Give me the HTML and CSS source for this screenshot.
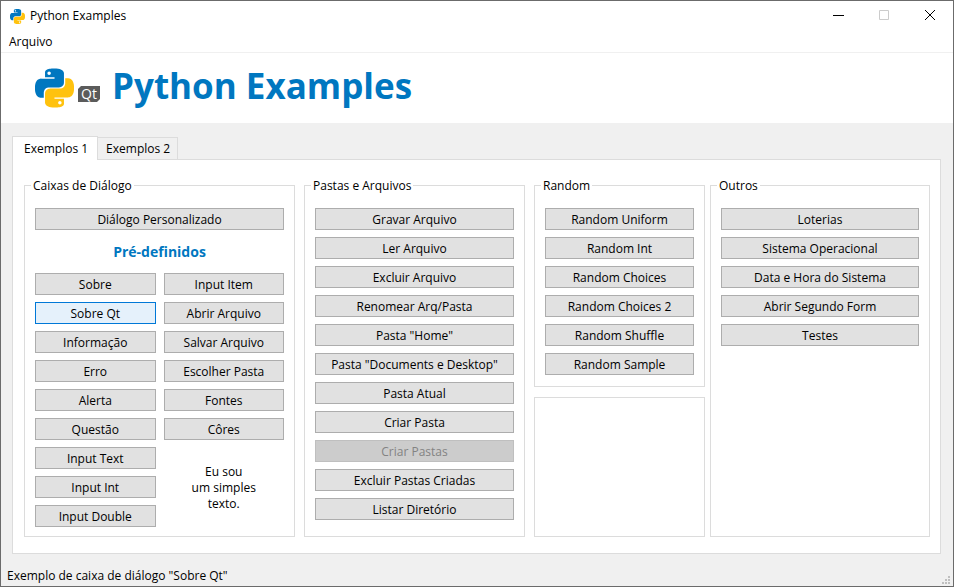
FILE: index.html
```html
<!DOCTYPE html>
<html lang="pt-BR">
<head>
<meta charset="utf-8">
<title>Python Examples</title>
<link rel="stylesheet" href="styles.css">
</head>
<body>
<svg class="defs" aria-hidden="true">
  <symbol id="python" viewBox="0 0 24 24">
    <path class="snake-top" fill-rule="evenodd" d="M14.25.18l.9.2.73.26.59.3.45.32.34.34.25.34.16.33.1.3.04.26.02.2-.01.13V8.5l-.05.63-.13.55-.21.46-.26.38-.3.31-.33.25-.35.19-.35.14-.33.1-.3.07-.26.04-.21.02H8.77l-.69.05-.59.14-.5.22-.41.27-.33.32-.27.35-.2.36-.15.37-.1.35-.07.32-.04.27-.02.21v3.06H3.17l-.21-.03-.28-.07-.32-.12-.35-.18-.36-.26-.36-.36-.35-.46-.32-.59-.28-.73-.21-.88-.14-1.05-.05-1.23.06-1.22.16-1.04.24-.87.32-.71.36-.57.4-.44.42-.33.42-.24.4-.16.36-.1.32-.05.24-.01h.16l.06.01h8.16v-.83H6.18l-.01-2.75-.02-.37.05-.34.11-.31.17-.28.25-.26.31-.23.38-.2.44-.18.51-.15.58-.12.64-.1.71-.06.77-.04.84-.02 1.27.05zm-6.3 1.98l-.23.33-.08.41.08.41.23.34.33.22.41.09.41-.09.33-.22.23-.34.08-.41-.08-.41-.23-.33-.33-.22-.41-.09-.41.09z"/>
    <path class="snake-bottom" fill-rule="evenodd" d="M21.04 6.11l.28.06.32.12.35.18.36.27.36.35.35.47.32.59.28.73.21.88.14 1.04.05 1.23-.06 1.23-.16 1.04-.24.86-.32.71-.36.57-.4.45-.42.33-.42.24-.4.16-.36.09-.32.05-.24.02-.16-.01h-8.22v.82h5.84l.01 2.76.02.36-.05.34-.11.31-.17.29-.25.25-.31.24-.38.2-.44.17-.51.15-.58.13-.64.09-.71.07-.77.04-.84.01-1.27-.04-1.07-.14-.9-.2-.73-.25-.59-.3-.45-.33-.34-.34-.25-.34-.16-.33-.1-.3-.04-.25-.02-.2.01-.13v-5.34l.05-.64.13-.54.21-.46.26-.38.3-.32.33-.24.35-.2.35-.14.33-.1.3-.06.26-.04.21-.02.13-.01h5.84l.69-.05.59-.14.5-.21.41-.28.33-.32.27-.35.2-.36.15-.36.1-.35.07-.32.04-.28.02-.21V6.07h2.09l.14.01zm-6.47 14.25l-.23.33-.08.41.08.41.23.33.33.23.41.08.41-.08.33-.23.23-.33.08-.41-.08-.41-.23-.33-.33-.23-.41-.08-.41.08z"/>
  </symbol>
</svg>
<div class="window">
  <header class="titlebar">
    <svg class="app-icon" aria-hidden="true"><use href="#python"/></svg>
    <span class="window-title">Python Examples</span>
    <button class="caption" type="button" aria-label="Minimizar"><svg viewBox="0 0 12 12"><path d="M1 5.500h11"/></svg></button>
    <button class="caption" type="button" aria-label="Maximizar" disabled><svg viewBox="0 0 12 12"><path d="M1.500 .5h9v9h-9z"/></svg></button>
    <button class="caption" type="button" aria-label="Fechar"><svg viewBox="0 0 12 12"><path d="M1 0l10 10M11 0L1 10"/></svg></button>
  </header>
  <nav class="menubar"><button type="button">Arquivo</button></nav>
  <div class="banner">
    <svg class="logo" viewBox="0 0 66 40" role="img" aria-label="Python Qt">
      <use href="#python" width="39" height="40"/>
      <path class="qt-plate" d="M46 18h19v13l-3 3H43V21z"/>
      <text class="qt-text" x="54" y="31" text-anchor="middle">Qt</text>
    </svg>
    <h1>Python Examples</h1>
  </div>
  <main>
    <div class="tabs" role="tablist">
      <button class="tab active" type="button" role="tab" aria-selected="true">Exemplos 1</button>
      <button class="tab" type="button" role="tab" aria-selected="false">Exemplos 2</button>
    </div>
    <div class="panel" role="tabpanel">
      <fieldset>
        <legend>Caixas de Diálogo</legend>
        <div class="stack">
          <button class="push" type="button">Diálogo Personalizado</button>
        </div>
        <h2>Pré-definidos</h2>
        <div class="pairs">
          <div class="stack">
            <button class="push" type="button">Sobre</button>
            <button class="push hover" type="button">Sobre Qt</button>
            <button class="push" type="button">Informação</button>
            <button class="push" type="button">Erro</button>
            <button class="push" type="button">Alerta</button>
            <button class="push" type="button">Questão</button>
            <button class="push" type="button">Input Text</button>
            <button class="push" type="button">Input Int</button>
            <button class="push" type="button">Input Double</button>
          </div>
          <div class="stack">
            <button class="push" type="button">Input Item</button>
            <button class="push" type="button">Abrir Arquivo</button>
            <button class="push" type="button">Salvar Arquivo</button>
            <button class="push" type="button">Escolher Pasta</button>
            <button class="push" type="button">Fontes</button>
            <button class="push" type="button">Côres</button>
            <p class="note">Eu sou<br>um simples<br>texto.</p>
          </div>
        </div>
      </fieldset>
      <fieldset>
        <legend>Pastas e Arquivos</legend>
        <div class="stack">
          <button class="push" type="button">Gravar Arquivo</button>
          <button class="push" type="button">Ler Arquivo</button>
          <button class="push" type="button">Excluir Arquivo</button>
          <button class="push" type="button">Renomear Arq/Pasta</button>
          <button class="push" type="button">Pasta "Home"</button>
          <button class="push" type="button">Pasta "Documents e Desktop"</button>
          <button class="push" type="button">Pasta Atual</button>
          <button class="push" type="button">Criar Pasta</button>
          <button class="push" type="button" disabled>Criar Pastas</button>
          <button class="push" type="button">Excluir Pastas Criadas</button>
          <button class="push" type="button">Listar Diretório</button>
        </div>
      </fieldset>
      <div class="right">
        <div class="column">
          <fieldset>
            <legend>Random</legend>
            <div class="stack">
              <button class="push" type="button">Random Uniform</button>
              <button class="push" type="button">Random Int</button>
              <button class="push" type="button">Random Choices</button>
              <button class="push" type="button">Random Choices 2</button>
              <button class="push" type="button">Random Shuffle</button>
              <button class="push" type="button">Random Sample</button>
            </div>
          </fieldset>
          <div class="empty"></div>
        </div>
        <fieldset>
          <legend>Outros</legend>
          <div class="stack">
            <button class="push" type="button">Loterias</button>
            <button class="push" type="button">Sistema Operacional</button>
            <button class="push" type="button">Data e Hora do Sistema</button>
            <button class="push" type="button">Abrir Segundo Form</button>
            <button class="push" type="button">Testes</button>
          </div>
        </fieldset>
      </div>
    </div>
  </main>
  <footer class="status">
    <span>Exemplo de caixa de diálogo "Sobre Qt"</span>
    <svg class="grip" viewBox="0 0 8 8" aria-hidden="true"><path d="M6 0h2v2h-2zM3 3h2v2h-2zM6 3h2v2h-2zM0 6h2v2h-2zM3 6h2v2h-2zM6 6h2v2h-2z"/></svg>
  </footer>
</div>
</body>
</html>
```
FILE: styles.css
```css
:root {
  --line: #dcdcdc;
  --blue: #0077c0;
}
* { box-sizing: border-box; }
body {
  margin: 0;
  font: 12px/16px "Open Sans", "Noto Sans", sans-serif;
  color: #000;
}
button {
  font: inherit;
  color: inherit;
  border: 0;
  background: none;
  padding: 0;
}
.defs { position: absolute; width: 0; height: 0; }
.snake-top { fill: var(--blue); }
.snake-bottom { fill: #ffc20e; }

.window {
  min-height: 100vh;
  display: flex;
  flex-direction: column;
  background: #f0f0f0;
  border: 1px solid #6b6b6b;
}
.titlebar {
  display: flex;
  align-items: center;
  height: 30px;
  padding-left: 9px;
  background: #fff;
}
.app-icon { width: 15px; height: 15px; margin-right: 5px; }
.window-title { flex: 1; }
.caption {
  width: 46px;
  height: 28px;
  display: grid;
  place-items: center;
}
.caption svg {
  width: 12px;
  height: 12px;
  fill: none;
  stroke: #000;
}
.caption:disabled svg { stroke: #ccc; }
.menubar {
  height: 22px;
  padding-left: 8px;
  background: #fff;
  border-bottom: 1px solid #f0f0f0;
}
.menubar button { height: 21px; }
.banner {
  display: flex;
  align-items: center;
  gap: 11px;
  height: 70px;
  padding-left: 34px;
  background: #fff;
}
.logo { width: 66px; height: 40px; }
.qt-plate { fill: #5b5b5b; }
.qt-text { font: 14px "Open Sans", sans-serif; fill: #fff; }
h1 {
  margin: 0;
  font-size: 35px;
  line-height: 66px;
  color: var(--blue);
  align-self: flex-start;
}

main {
  flex: 1;
  display: flex;
  flex-direction: column;
  padding: 13px 12px 0 11px;
}
.tabs { display: flex; align-items: flex-end; }
.tab {
  height: 22px;
  padding: 1px 7px 0 8px;
  border: 1px solid var(--line);
  border-width: 1px 1px 0 0;
}
.tab.active {
  height: 24px;
  padding: 0 9px 0 11px;
  border-left-width: 1px;
  background: #fff;
  margin-bottom: -1px;
  position: relative;
}
.panel {
  flex: 1;
  display: grid;
  grid-template-columns: 271fr 221fr 396fr;
  gap: 9px;
  padding: 18px 10px 16px 11px;
  background: #fff;
  border: 1px solid var(--line);
}
.right {
  display: grid;
  grid-template-columns: 171fr 220fr;
  gap: 5px;
}
.column {
  display: flex;
  flex-direction: column;
  gap: 10px;
}
.empty { flex: 1; border: 1px solid var(--line); }
fieldset {
  min-width: 0;
  margin: 0;
  padding: 15px 6px 8px;
  border: 1px solid var(--line);
}
.column fieldset { padding-bottom: 11px; }
legend { padding: 0 2px; line-height: 15px; }
.stack {
  display: grid;
  gap: 7px;
  align-content: start;
  padding: 0 4px;
}
.pairs {
  display: grid;
  grid-template-columns: 1fr 1fr;
  gap: 8px;
  padding: 0 4px;
}
.pairs .stack { padding: 0; }
.push {
  min-width: 0;
  height: 22px;
  padding-top: 2px;
  background: #e1e1e1;
  border: 1px solid #adadad;
  white-space: nowrap;
}
.push.hover { background: #e5f1fb; border-color: #0078d7; }
.push:disabled {
  background: #ccc;
  border-color: #bfbfbf;
  color: #838383;
}
h2 {
  margin: 0;
  font-size: 14px;
  line-height: 43px;
  text-align: center;
  color: var(--blue);
}
.note { margin: 17px 0 0; text-align: center; }

.status {
  display: flex;
  justify-content: space-between;
  align-items: flex-start;
  height: 32px;
  padding: 14px 3px 2px 6px;
}
.grip { width: 8px; height: 8px; fill: #bfbfbf; align-self: flex-end; }
```
